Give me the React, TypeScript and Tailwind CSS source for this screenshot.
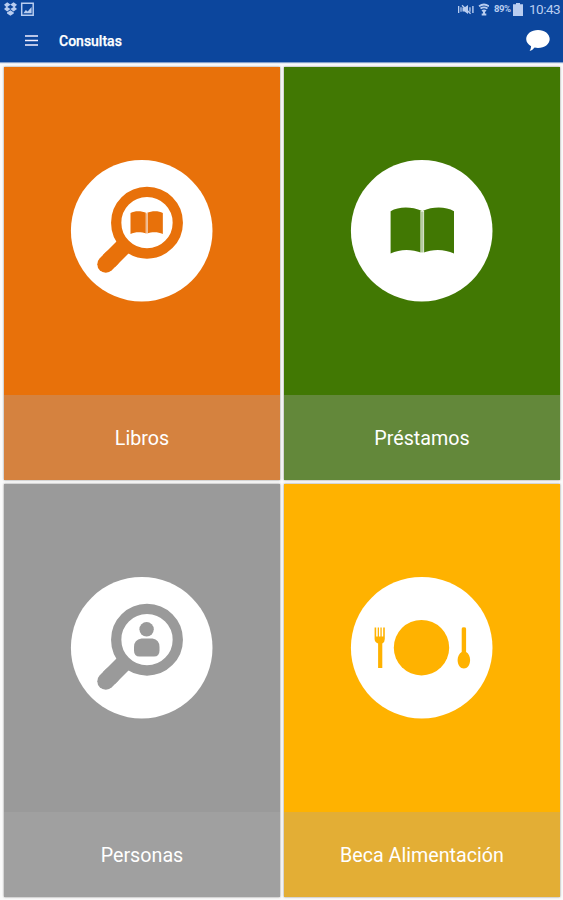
import type { ReactNode } from 'react';

function Book({ color, gutter }: { color: string; gutter: string }) {
  return (
    <>
      <path
        fill={color}
        d="M0 3.7C8-.9 20-1.4 31.7 3.4 43-1.4 55.5-.9 63.4 3.7V46C54 41.6 43 41 31.7 45.4 20 41 9 41.6 0 46Z"
      />
      <path d="M31.7 3.2V46" stroke="#fff" strokeWidth="3.6" />
      <path d="M31.7 4V45" stroke={gutter} strokeWidth="2.6" />
    </>
  );
}

function Magnifier({ color }: { color: string }) {
  return (
    <g stroke={color} fill="none">
      <circle cx="143" cy="155.7" r="30.8" strokeWidth="10.3" />
      <path d="M101.8 197.2 108 191" strokeWidth="17" strokeLinecap="round" />
      <path d="M105 194 121.5 177.5" strokeWidth="17" />
    </g>
  );
}

function Card({ label, top, bottom, children }: { label: string; top: string; bottom: string; children: ReactNode }) {
  return (
    <section className={`flex h-[413px] flex-col shadow-[0_0_2px_rgba(0,0,0,0.45)] ${top}`}>
      <svg viewBox="0 0 276 328" className="h-[328px] w-[276px]">
        <circle cx="137.7" cy="163.7" r="70.8" fill="#fff" />
        {children}
      </svg>
      <div className={`flex flex-1 items-center justify-center pt-[3px] text-[19.7px] text-white ${bottom}`}>{label}</div>
    </section>
  );
}

function StatusBar() {
  return (
    <div className="flex h-[19px] items-center justify-between pl-1 pr-[3px] text-[#b9cdf0]">
      <svg viewBox="0 0 31 15" className="h-[15px] w-[31px]" fill="currentColor">
        <path d="m3.2.3 3.2 2.2 3.2-2.2L13 2.8l-2.2 2.1L13 7.1 9.6 9.4 6.4 7.1 3.2 9.4 0 7.1l2.2-2.2L0 2.8Zm3.2 2.4L3.3 4.9l3.1 2 3.1-2ZM3 10.4l3.4-2.2 3.4 2.2v1L6.4 13.8 3 11.4Z" />
        <path d="M17.7 1.2h11.5v12H17.7Z" fill="none" stroke="currentColor" strokeWidth="1.5" />
        <path d="m19.4 11.2 2.4-3.3 1.9 1.7 3.9-4.5v6.1Z" />
      </svg>
      <div className="flex items-center">
        <svg viewBox="0 0 32 14" className="mr-[5px] h-[14px] w-[32px]" fill="currentColor">
          <path d="M1 3h1.3v7H1Zm2.4 1.2h1.2v4.6H3.4ZM5.5 4.500h2L11 2v9L7.500 8.500h-2ZM12.300 4.200h1.300v4.600h-1.300Zm2.900-1.200h1.400v7h-1.400Z" />
          <path d="m5 2.200 8.600 8.600" stroke="currentColor" strokeWidth="1.300" />
          <path d="M22 3.200c3-2 7-2 10 0M23.500 5.600c2.200-1.500 4.800-1.500 7 0" fill="none" stroke="currentColor" strokeWidth="1.800" />
          <path d="M24.500 7.200q2.500-1.500 5 0L28 9.300v1.200h1.300v2H24.700v-2H26V9.300Z" />
        </svg>
        <span className="w-[18px] text-[9.5px] font-bold tracking-[-0.4px]">89%</span>
        <svg viewBox="0 0 10 13" className="ml-[1px] mr-[6px] h-[13px] w-[10px]" fill="currentColor">
          <path d="M3 0h4v1.2h3V13H0V1.2h3Z" />
        </svg>
        <span className="w-[31px] whitespace-nowrap text-[13.5px] tracking-[-0.5px]">10:43</span>
      </div>
    </div>
  );
}

export default function App() {
  return (
    <main className="h-[900px] w-[563px] overflow-hidden bg-[#fafafa] font-['Roboto',sans-serif]">
      <header className="h-[62px] bg-[#0c469d] shadow-[0_1px_1px_rgba(12,70,157,0.5)]">
        <StatusBar />
        <div className="flex h-[43px] items-center pl-[25px] pr-[13px]">
          <svg viewBox="0 0 13 11" className="h-[11px] w-[13px]" stroke="#f3efff" strokeWidth="1.4">
            <path d="M0 1h13M0 5.5h13M0 10h13" />
          </svg>
          <h1 className="ml-[21px] flex-1 pt-px text-[14px] font-medium leading-none text-white [-webkit-text-stroke:0.25px_white]">Consultas</h1>
          <svg viewBox="0 0 24 22" className="h-[22px] w-[24px]" fill="#fff">
            <path d="M12 0C18.6 0 23.7 3.9 23.7 9S18.6 18 12 18q-1.8 0-3.4-.4Q6.4 20.6 3.6 21 5 18.8 5.1 16.2C2 14.5.2 12 .2 9 .2 3.9 5.4 0 12 0Z" />
          </svg>
        </div>
      </header>
      <div className="grid grid-cols-[276px_276px] gap-1 pl-1 pt-[5px]">
        <Card label="Libros" top="bg-[#e8710a]" bottom="bg-[#d5823f]">
          <Magnifier color="#e8710a" />
          <g transform="translate(126.5 144.2) scale(.51 .495)">
            <Book color="#e8710a" gutter="#efb990" />
          </g>
        </Card>
        <Card label="Préstamos" top="bg-[#417803]" bottom="bg-[#63883a]">
          <g transform="translate(106.6 140.5)">
            <Book color="#417803" gutter="#b5cba0" />
          </g>
        </Card>
        <Card label="Personas" top="bg-[#9a9a9a]" bottom="bg-[#a0a0a0]">
          <Magnifier color="#9a9a9a" />
          <circle cx="142.6" cy="145.3" r="7.2" fill="#9a9a9a" />
          <path
            d="M137.5 154.5h11q7 1.2 7 8.5v3.5q0 6-5.5 6h-14.5q-5.5 0-5.5-6V163q0-7.3 7.5-8.5Z"
            fill="#9a9a9a"
          />
        </Card>
        <Card label="Beca Alimentación" top="bg-[#ffb200]" bottom="bg-[#e3ae35]">
          <g fill="#ffb200">
            <circle cx="137.5" cy="163.7" r="27.7" />
            <path d="M90.6 143.5h1.6v9h1.5v-9h1.3v9h1.4v-9h1.3v9h1.5v-9h1.6v11.5q0 3.2-2.5 4.5V184h-4.2v-24.5q-3.5-1.3-3.5-4.5Z" />
            <path d="M177.7 144.7q0-1.4 2.2-1.4t2.2 1.4v23.2c2.5 1.3 4 4.6 4 8 0 5-2.8 8.5-6.2 8.5s-6.3-3.5-6.3-8.5c0-3.4 1.8-6.7 4.1-8Z" />
          </g>
        </Card>
      </div>
    </main>
  );
}
